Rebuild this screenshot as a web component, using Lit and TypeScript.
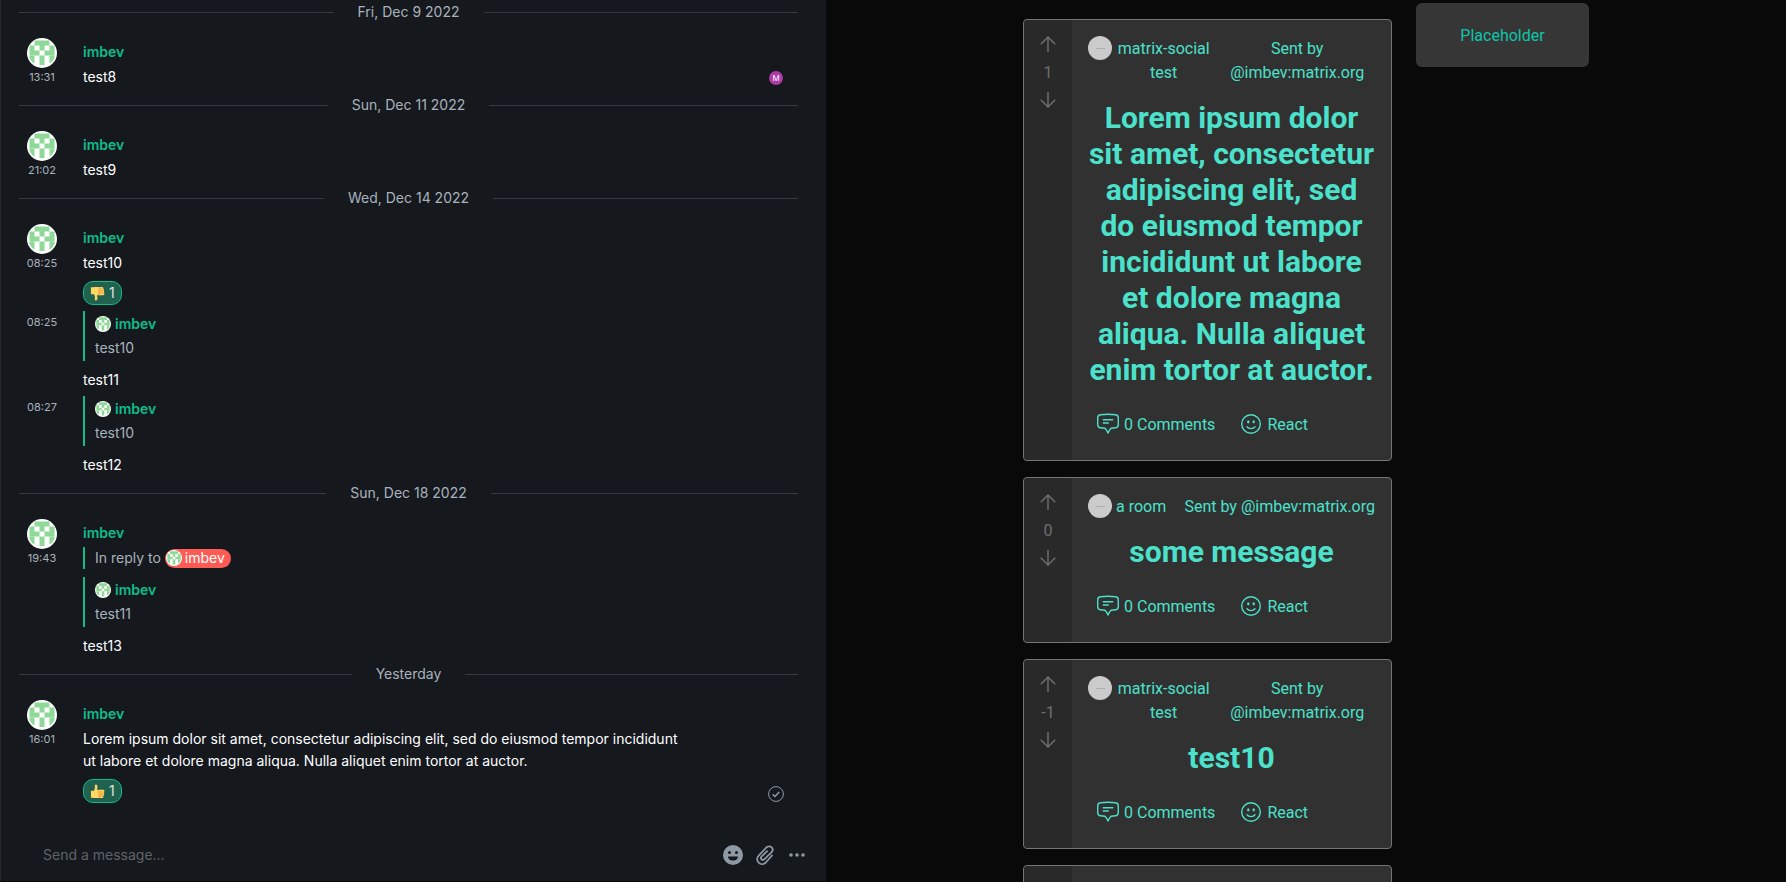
import { LitElement, html, css, svg, nothing } from "lit";
import { customElement, property } from "lit/decorators.js";

const identicon = html`<svg class="identicon" viewBox="0 0 30 30" aria-hidden="true">
  <circle cx="15" cy="15" r="15" fill="#fff" />
  <g fill="#8fd998">
    <path d="M7.5 2.5h15v5h-15z M2.5 7.5h5v10h-5z M22.5 7.5h5v10h-5z M12.5 7.5h5v5h-5z M7.5 12.5h5v5h-5z M17.5 12.5h5v5h-5z" />
    <path d="M2.5 17.5h5v8l-2.4-1.6-2.6-4z M22.5 17.5h5v2.4l-2.6 4-2.4 1.6z M12.5 17.5h5v9.5h-5z" />
  </g>
</svg>`;

const thumb = svg`
  <path fill="#ffd764" d="M1 7.200h3.200C5 6 5.300 4.900 5.200 3.300 5.100 1.500 5.300.5 6.200.5c1.500 0 2 1.900 1.700 3.500-.1.900-.3 1.500-.5 2.200h6.700c1.500 0 1.700 1.900.6 2.300.8.500.7 1.900-.1 2.200.6.600.4 1.800-.4 2.100.3 1.300-.3 2.200-1.400 2.200H6c-1.700 0-2.400-.3-5-.3z" />
  <path stroke="#ec8f2e" stroke-width=".9" fill="none" d="M9.800 8.500h4.700M10 10.700h4.300M10 12.800h3.800M9.600 6.300c-.5.700-.5 1.500 0 2.200-.4.700-.3 1.500.2 2.200-.3.700-.2 1.400.2 2.100-.2.700-.1 1.400.2 2" />`;

interface Quote {
  text: string;
}
interface Message {
  time: string;
  name?: boolean;
  mention?: boolean;
  quote?: Quote;
  body: string;
  reaction?: "up" | "down";
  status?: "seen" | "sent";
}
interface Day {
  label: string;
  messages: Message[];
}

const lorem =
  "Lorem ipsum dolor sit amet, consectetur adipiscing elit, sed do eiusmod tempor incididunt ut labore et dolore magna aliqua. Nulla aliquet enim tortor at auctor.";

const days: Day[] = [
  { label: "Fri, Dec 9 2022", messages: [{ time: "13:31", name: true, body: "test8", status: "seen" }] },
  { label: "Sun, Dec 11 2022", messages: [{ time: "21:02", name: true, body: "test9" }] },
  {
    label: "Wed, Dec 14 2022",
    messages: [
      { time: "08:25", name: true, body: "test10", reaction: "down" },
      { time: "08:25", quote: { text: "test10" }, body: "test11" },
      { time: "08:27", quote: { text: "test10" }, body: "test12" },
    ],
  },
  {
    label: "Sun, Dec 18 2022",
    messages: [{ time: "19:43", name: true, mention: true, quote: { text: "test11" }, body: "test13" }],
  },
  {
    label: "Yesterday",
    messages: [{ time: "16:01", name: true, body: lorem, reaction: "up", status: "sent" }],
  },
];

@customElement("chat-message")
class ChatMessage extends LitElement {
  @property({ attribute: false }) message!: Message;

  static styles = css`
    :host {
      display: block;
    }
    .row {
      display: grid;
      grid-template-columns: 30px minmax(0, 1fr) 16px;
      column-gap: 26px;
      padding: 0 14px 5px 8px;
    }
    .row.first {
      padding-top: 15px;
    }
    .side {
      display: flex;
      flex-direction: column;
      align-items: center;
    }
    .avatar {
      width: 30px;
      height: 30px;
    }
    .identicon {
      display: block;
      width: 100%;
      height: 100%;
    }
    .time {
      font-size: 11px;
      line-height: 18px;
      color: #a9b2bc;
    }
    .row:not(.first) .time {
      line-height: 22px;
    }
    .content {
      padding-right: 56px;
      color: #fff;
    }
    .first .content {
      padding-top: 3px;
    }
    .name {
      color: #0dbd8b;
      font-weight: 600;
    }
    .first .content > .name {
      margin-bottom: 3px;
    }
    .quote {
      box-sizing: border-box;
      border-left: 2px solid #0dbd8b;
      padding-left: 10px;
      margin-bottom: 8px;
      color: #a9b2bc;
      width: fit-content;
    }
    .quote.nested {
      padding-top: 1px;
      padding-bottom: 2px;
    }
    .who {
      display: flex;
      align-items: center;
      gap: 4px;
      height: 24px;
      margin-bottom: 1px;
    }
    .tiny {
      width: 16px;
      height: 16px;
      flex: none;
    }
    .mention {
      display: flex;
      align-items: center;
      gap: 3px;
      border-radius: 10px;
      padding: 0 6px 0 1px;
      height: 19px;
      background: #ff5b55;
      color: #fff;
      text-decoration: none;
    }
    .reply {
      display: flex;
      align-items: center;
      gap: 4px;
    }
    .reaction {
      box-sizing: border-box;
      display: flex;
      align-items: center;
      gap: 4px;
      height: 24px;
      margin: 7px 0 1px;
      padding: 0 6px;
      border: 1px solid #0dbd8b;
      border-radius: 10px;
      background: #21624f;
      color: #dbe5e2;
      font: inherit;
    }
    .reaction svg {
      width: 15px;
      height: 15px;
    }
    .flip {
      transform: scaleY(-1);
    }
    .state {
      display: flex;
      align-items: flex-end;
      justify-content: center;
      padding-bottom: 2px;
    }
    .seen {
      width: 14px;
      height: 14px;
      margin-bottom: 1px;
      border-radius: 50%;
      background: #ac3ba8;
      color: #fff;
      font-size: 8px;
      line-height: 14px;
      text-align: center;
    }
  `;

  render() {
    const m = this.message;
    return html`<article class="row ${m.name ? "first" : ""}">
      <div class="side">
        ${m.name ? html`<div class="avatar">${identicon}</div>` : nothing}
        <time class="time">${m.time}</time>
      </div>
      <div class="content">
        ${m.name ? html`<div class="name">imbev</div>` : nothing}
        ${m.mention
          ? html`<div class="quote reply">
              <span>In reply to</span>
              <a class="mention" href="#imbev"><span class="tiny">${identicon}</span>imbev</a>
            </div>`
          : nothing}
        ${m.quote
          ? html`<div class="quote nested">
              <div class="who name"><span class="tiny">${identicon}</span>imbev</div>
              <div>${m.quote.text}</div>
            </div>`
          : nothing}
        <div>${m.body}</div>
        ${m.reaction
          ? html`<button class="reaction" type="button">
              <svg class=${m.reaction === "down" ? "flip" : ""} viewBox="0 0 16 16" aria-hidden="true">${thumb}</svg>1
            </button>`
          : nothing}
      </div>
      <div class="state">
        ${m.status === "seen" ? html`<span class="seen">M</span>` : nothing}
        ${m.status === "sent"
          ? html`<svg width="16" height="16" viewBox="0 0 16 16" fill="none" aria-label="Sent">
              <circle cx="8" cy="8" r="7.4" stroke="#8e99a4" />
              <path d="M4.700 8.400l2.300 2.100 4.200-4.600" stroke="#8e99a4" stroke-width="1.500" />
            </svg>`
          : nothing}
      </div>
    </article>`;
  }
}

@customElement("chat-panel")
class ChatPanel extends LitElement {
  static styles = css`
    :host {
      display: flex;
      flex-direction: column;
      box-sizing: border-box;
      border-left: 1px solid #262b30;
      background: #15191e;
      font: 14px/22px Inter, sans-serif;
    }
    .timeline {
      flex: 1;
      min-height: 0;
      overflow: hidden;
      padding: 0 28px 0 18px;
    }
    .day {
      display: flex;
      align-items: center;
      gap: 24px;
      margin: 0;
      padding-top: 1px;
      font-size: 14px;
      font-weight: 400;
      color: #a9b2bc;
    }
    .day::before,
    .day::after {
      content: "";
      flex: 1;
      height: 1px;
      background: #363945;
    }
    .composer {
      display: flex;
      align-items: center;
      gap: 12px;
      padding: 0 19px 7px 34px;
    }
    .field {
      flex: 1;
      min-width: 0;
      border: 0;
      outline: 0;
      padding: 8px;
      background: none;
      color: #fff;
      font: inherit;
    }
    .field::placeholder {
      color: #5f6368;
      opacity: 1;
    }
    .tool {
      display: flex;
      padding: 0;
      border: 0;
      background: none;
      color: #8e99a4;
    }
  `;

  render() {
    return html`
      <div class="timeline">
        ${days.map(
          (d) => html`<h2 class="day">${d.label}</h2>
            ${d.messages.map((m) => html`<chat-message .message=${m}></chat-message>`)}`
        )}
      </div>
      <form class="composer">
        <input class="field" type="text" placeholder="Send a message..." aria-label="Send a message" />
        <button class="tool" type="button" aria-label="Emoji">
          <svg width="20" height="20" viewBox="0 0 20 20">
            <circle cx="10" cy="10" r="10" fill="currentColor" />
            <g fill="#15191e">
              <circle cx="6.500" cy="7.500" r="1.500" />
              <circle cx="13.500" cy="7.500" r="1.500" />
              <path d="M5 11.500h10c0 2.300-2.200 4.100-5 4.100s-5-1.800-5-4.100z" />
            </g>
          </svg>
        </button>
        <button class="tool" type="button" aria-label="Attach a file">
          <svg width="20" height="20" viewBox="0 0 20 20" fill="none" stroke="currentColor" stroke-width="1.800" stroke-linecap="round">
            <path d="M17 10.500l-6.200 7c-2 2-5.200 2.100-7.200.2s-1.900-5 .1-7L11.300 2.500c1.500-1.500 3.900-1.600 5.300-.2s1.300 3.600-.2 5.100l-6.900 6.700c-.9.900-2.200 1-3 .2s-.7-2 .2-2.900l5.500-5.300" />
          </svg>
        </button>
        <button class="tool" type="button" aria-label="More">
          <svg width="20" height="20" viewBox="0 0 20 20" fill="currentColor">
            <circle cx="4" cy="10" r="1.800" />
            <circle cx="10" cy="10" r="1.800" />
            <circle cx="16" cy="10" r="1.800" />
          </svg>
        </button>
      </form>
    `;
  }
}

@customElement("post-card")
class PostCard extends LitElement {
  @property() room = "";
  @property() heading = "";
  @property({ type: Number }) score = 0;

  static styles = css`
    :host {
      display: flex;
      border: 1px solid #757575;
      border-radius: 4px;
      background: #313131;
      color: #4be1cb;
      text-align: center;
      font: 16px/24px Roboto, sans-serif;
    }
    .votes {
      box-sizing: border-box;
      width: 48px;
      flex: none;
      display: flex;
      flex-direction: column;
      align-items: center;
      gap: 7px;
      padding: 16px 0;
      border-radius: 4px;
      background: #292929;
      color: #6f6f6f;
    }
    .score {
      padding-top: 2px;
    }
    button {
      display: flex;
      align-items: center;
      padding: 0;
      border: 0;
      background: none;
      color: inherit;
      font: inherit;
    }
    .main {
      flex: 1;
      min-width: 0;
      padding: 16px;
    }
    .head {
      display: flex;
      justify-content: space-between;
      gap: 8px;
    }
    .room {
      display: flex;
      gap: 4px;
    }
    .label {
      padding-top: 1px;
    }
    .logo {
      display: flex;
      align-items: center;
      justify-content: center;
      width: 24px;
      height: 24px;
      flex: none;
      border-radius: 50%;
      background: #cbcbcb;
    }
    .logo::after {
      content: "";
      width: 9px;
      height: 1px;
      background: #b0b0b0;
    }
    h2 {
      margin: 15px 0 16px;
      font-size: 30px;
      line-height: 36px;
      font-weight: 700;
    }
    .actions {
      display: flex;
      gap: 16px;
      padding-left: 8px;
    }
    .actions button {
      height: 40px;
      gap: 4px;
      padding-right: 8px;
    }
    .actions .label {
      padding-top: 2px;
    }
  `;

  render() {
    return html`
      <div class="votes">
        <button type="button" aria-label="Upvote">
          <svg width="16" height="16" viewBox="0 0 16 16" fill="none" stroke="currentColor" stroke-width="1.400">
            <path d="M8 16V1M.800 8.200L8 1l7.200 7.200" />
          </svg>
        </button>
        <span class="score">${this.score}</span>
        <button type="button" aria-label="Downvote">
          <svg width="16" height="16" viewBox="0 0 16 16" fill="none" stroke="currentColor" stroke-width="1.400">
            <path d="M8 0v15M.800 7.800L8 15l7.200-7.200" />
          </svg>
        </button>
      </div>
      <div class="main">
        <div class="head">
          <div class="room"><span class="logo"></span><span class="label">${this.room}</span></div>
          <div class="label">Sent by @imbev:matrix.org</div>
        </div>
        <h2>${this.heading}</h2>
        <div class="actions">
          <button type="button">
            <svg width="24" height="24" viewBox="0 0 24 24" fill="none" stroke="currentColor" stroke-width="1.400" stroke-linejoin="round">
              <path d="M4.500 2.800Q12 1.800 19.500 2.800Q22.200 3 22.300 6v6.500Q22.200 15.600 19.500 15.800L15 16.200Q13 18.300 12 21Q11 18.300 9 16.200L4.500 15.800Q1.800 15.600 1.700 12.500V6Q1.800 3 4.500 2.800z" />
              <path d="M6.800 7.800h10.400M6.800 11h6" />
            </svg>
            <span class="label">0 Comments</span>
          </button>
          <button type="button">
            <svg width="24" height="24" viewBox="0 0 24 24" fill="none" stroke="currentColor" stroke-width="1.400">
              <circle cx="12" cy="12" r="9.300" />
              <path d="M8 14.800q1.400 1.800 4 1.800t4-1.800" stroke-linecap="round" />
              <g fill="currentColor" stroke="none">
                <ellipse cx="9.300" cy="9.800" rx="1.200" ry="1.600" />
                <ellipse cx="14.700" cy="9.800" rx="1.200" ry="1.600" />
              </g>
            </svg>
            <span class="label">React</span>
          </button>
        </div>
      </div>
    `;
  }
}

@customElement("app-root")
class AppRoot extends LitElement {
  static styles = css`
    :host {
      display: flex;
      height: 100vh;
      overflow: hidden;
      background: #090909;
    }
    .chat {
      width: 46.25%;
      flex: none;
      margin-bottom: 1px;
    }
    .social {
      flex: 1;
      min-width: 0;
      display: flex;
      justify-content: center;
      align-items: flex-start;
      gap: 24px;
    }
    .feed {
      display: flex;
      flex-direction: column;
      gap: 16px;
      width: 369px;
      padding-top: 19px;
    }
    .aside {
      box-sizing: border-box;
      width: 173px;
      margin-top: 3px;
      padding: 21px 20px 19px;
      border-radius: 6px;
      background: #363636;
      color: #0bc5a9;
      text-align: center;
      font: 16px/24px Roboto, sans-serif;
    }
  `;

  render() {
    return html`
      <chat-panel class="chat"></chat-panel>
      <main class="social">
        <div class="feed">
          <post-card room="matrix-social test" score="1" heading=${lorem}></post-card>
          <post-card room="a room" score="0" heading="some message"></post-card>
          <post-card room="matrix-social test" score="-1" heading="test10"></post-card>
          <post-card room="matrix-social test" score="0" heading="test9"></post-card>
        </div>
        <aside class="aside">Placeholder</aside>
      </main>
    `;
  }
}
